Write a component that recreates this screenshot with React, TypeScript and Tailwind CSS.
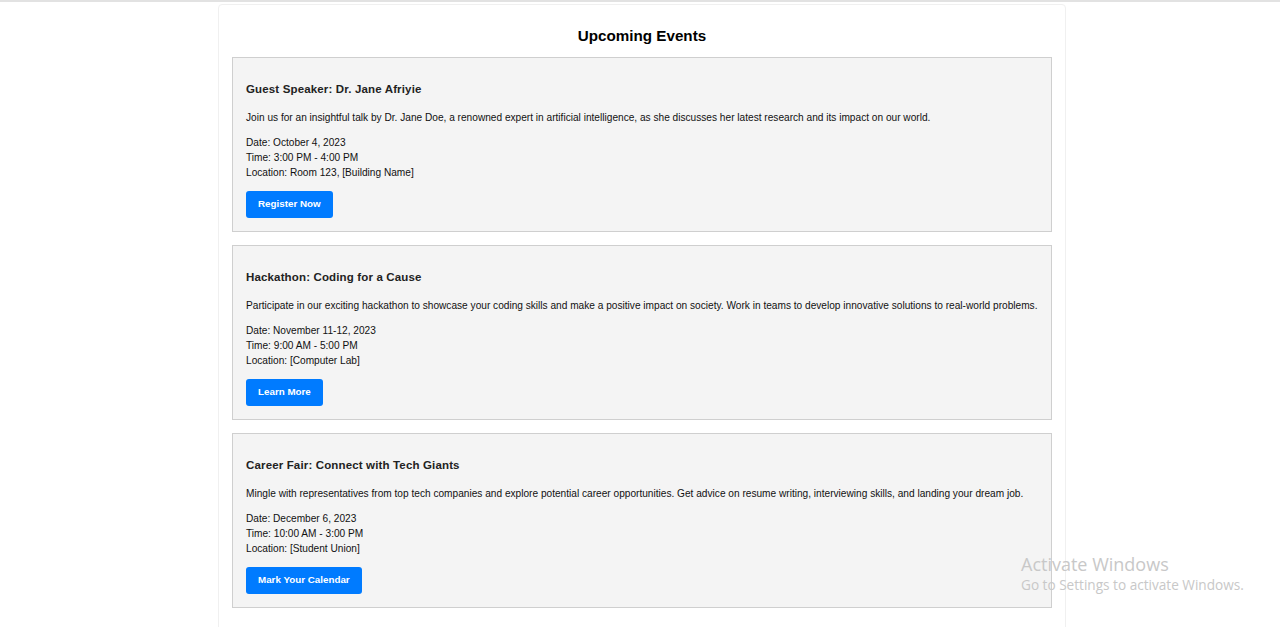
import React from "react";

const events = [
  {
    title: "Guest Speaker: Dr. Jane Afriyie",
    desc: "Join us for an insightful talk by Dr. Jane Doe, a renowned expert in artificial intelligence, as she discusses her latest research and its impact on our world.",
    date: "October 4, 2023",
    time: "3:00 PM - 4:00 PM",
    location: "Room 123, [Building Name]",
    button: "Register Now",
  },
  {
    title: "Hackathon: Coding for a Cause",
    desc: "Participate in our exciting hackathon to showcase your coding skills and make a positive impact on society. Work in teams to develop innovative solutions to real-world problems.",
    date: "November 11-12, 2023",
    time: "9:00 AM - 5:00 PM",
    location: "[Computer Lab]",
    button: "Learn More",
  },
  {
    title: "Career Fair: Connect with Tech Giants",
    desc: "Mingle with representatives from top tech companies and explore potential career opportunities. Get advice on resume writing, interviewing skills, and landing your dream job.",
    date: "December 6, 2023",
    time: "10:00 AM - 3:00 PM",
    location: "[Student Union]",
    button: "Mark Your Calendar",
  },
];

export default function App() {
  return (
    <div className="relative h-[627px] overflow-hidden bg-white font-['Liberation_Sans',Arial,sans-serif] text-black">
      <div className="h-[2px] w-full bg-[#e2e2e2]" />
      <div className="ml-[218px] mt-[2px] w-[848px] h-[640px] rounded-[4px] border border-[#f0f0f0] bg-white px-[13px] pt-[18px]">
        <h2 className="text-center text-[15.2px] font-bold leading-[26px] text-black">Upcoming Events</h2>
        <div className="mt-[8px] flex flex-col gap-[13px]">
          {events.map((e) => (
            <div key={e.title} className="border border-[#cfcfcf] bg-[#f4f4f4] px-[13px] pt-[24px] pb-[13px]">
              <h3 className="text-[11.5px] font-bold leading-[15px] tracking-[0.15px] text-[#222]">{e.title}</h3>
              <p className="mt-[13px] text-[10.15px] leading-[15px] whitespace-nowrap text-[#111]">{e.desc}</p>
              <div className="mt-[10px] text-[10.15px] leading-[15px] text-[#111]">
                <p>Date: {e.date}</p>
                <p>Time: {e.time}</p>
                <p>Location: {e.location}</p>
              </div>
              <button className="mt-[11px] h-[27px] rounded-[3px] bg-[#007bff] px-[12px] text-[9.8px] font-bold text-white">
                {e.button}
              </button>
            </div>
          ))}
        </div>
      </div>
      <div className="absolute left-[1021px] top-[552px] font-['Open_Sans','Noto_Sans',sans-serif] text-[#c8c8c8]">
        <div className="text-[18px] leading-[24px]">Activate Windows</div>
        <div className="text-[13.6px] leading-[18px]">Go to Settings to activate Windows.</div>
      </div>
    </div>
  );
}
